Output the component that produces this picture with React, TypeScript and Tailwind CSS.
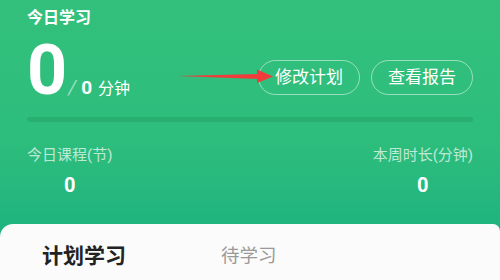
import React from 'react';

const FONT = { fontFamily: 'Roboto, "Noto Sans CJK SC", sans-serif' };

// ─── Red annotation arrow ─────────────────────────────────────
const Arrow = () => (
  <svg width="96" height="16" viewBox="0 0 96 16" className="absolute left-[177px] top-[69px]">
    <path d="M0 7 L82 5 L82 10 Z" fill="#f23b3b" />
    <path d="M80 0.5 L96 7.5 L80 14 Z" fill="#f23b3b" />
  </svg>
);

const Stat = ({ label, value }: { label: string; value: string }) => (
  <div className="flex flex-col items-center">
    <span className="text-[15px] leading-[20px] text-white/70">{label}</span>
    <span className="mt-[8px] text-[20px] leading-[24px] font-bold text-white">{value}</span>
  </div>
);

export default function App() {
  return (
    <div
      className="relative w-[500px] h-[280px] overflow-hidden bg-gradient-to-b from-[#33c07c] via-[#2dbd7c] to-[#14ae80]"
      style={FONT}
    >
      <div className="px-[27px] pt-[7px]">
        <p className="text-[16px] leading-[22px] font-bold text-white">今日学习</p>

        <div className="mt-[6px] flex items-start justify-between h-[70px]">
          <div className="flex items-baseline text-white">
            <span className="text-[70px] leading-[70px] font-bold">0</span>
            <span className="ml-[1px] text-[20px] italic text-white/50">/</span>
            <span className="ml-[5px] text-[19px] font-bold">0</span>
            <span className="ml-[6px] text-[16px]">分钟</span>
          </div>
          <div className="mt-[25px] flex gap-[11px]">
            <button className="w-[102px] h-[35px] rounded-full border border-white/50 text-[17px] text-white">
              修改计划
            </button>
            <button className="w-[102px] h-[35px] rounded-full border border-white/50 text-[17px] text-white">
              查看报告
            </button>
          </div>
        </div>

        <div className="mt-[12px] h-[5px] rounded-full bg-[#27a96b]/70" />

        <div className="mt-[23px] flex justify-between">
          <Stat label="今日课程(节)" value="0" />
          <Stat label="本周时长(分钟)" value="0" />
        </div>
      </div>

      <Arrow />

      <div className="absolute left-0 right-0 top-[224px] bottom-0 bg-[#fbfbfb] rounded-tl-[13px] rounded-tr-[7px]">
        <div className="flex items-center pt-[18px] pl-[42px]">
          <span className="text-[21px] leading-[28px] font-bold text-[#222]">计划学习</span>
          <span className="ml-[95px] whitespace-nowrap text-[18.5px] leading-[28px] text-[#999]">
            待学习
          </span>
        </div>
      </div>
    </div>
  );
}
